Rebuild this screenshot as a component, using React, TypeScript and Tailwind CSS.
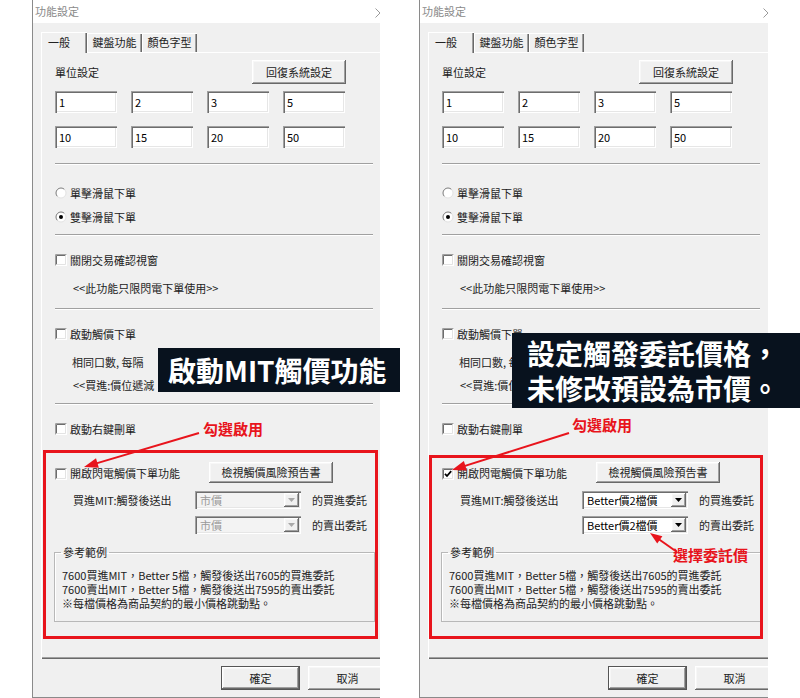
import React from 'react';

const RED = '#e8141c';

const raised =
  'shadow-[inset_-1px_-1px_0_#696969,inset_1px_1px_0_#ffffff,inset_-2px_-2px_0_#a0a0a0,inset_2px_2px_0_#f7f7f7]';
const sunken =
  'shadow-[inset_1px_1px_0_#a0a0a0,inset_2px_2px_0_#6d6d6d,inset_-1px_-1px_0_#ffffff,inset_-2px_-2px_0_#e6e6e6]';
const tabEdge = 'shadow-[inset_1px_1px_0_#ffffff,inset_-1px_0_0_#696969,inset_-2px_0_0_#a0a0a0]';

function CheckBox({ checked = false }: { checked?: boolean }) {
  return (
    <svg width="12" height="12" viewBox="0 0 12 12" className="shrink-0">
      <rect x="0" y="0" width="12" height="12" fill="#ffffff" />
      <path d="M0.5 11.5V0.5H11.5" stroke="#a0a0a0" fill="none" />
      <path d="M1.5 10.5V1.5H10.5" stroke="#6d6d6d" fill="none" />
      <path d="M10.5 1.5V10.5H1.5" stroke="#e3e3e3" fill="none" />
      {checked && <path d="M3 5.8l2 2.2L9.2 3.2" stroke="#000000" strokeWidth="1.8" fill="none" />}
    </svg>
  );
}

function Radio({ checked = false }: { checked?: boolean }) {
  return (
    <svg width="12" height="12" viewBox="0 0 12 12" className="shrink-0">
      <circle cx="6" cy="6" r="5" fill="#ffffff" />
      <path d="M2.46 9.54A5 5 0 0 1 9.54 2.46" stroke="#7a7a7a" fill="none" />
      <path d="M9.54 2.46A5 5 0 0 1 2.46 9.54" stroke="#e3e3e3" fill="none" />
      {checked && <circle cx="6" cy="6" r="2" fill="#000000" />}
    </svg>
  );
}

function WinButton({ children, className = '' }: { children: React.ReactNode; className?: string }) {
  return (
    <div className={`flex shrink-0 items-center justify-center bg-[#f0f0f0] text-[11px] text-[#222222] ${raised} ${className}`}>
      {children}
    </div>
  );
}

function TextBox({ value }: { value: string }) {
  return (
    <div className={`flex h-[22px] items-center bg-white pl-[4px] text-[11px] text-black ${sunken}`}>{value}</div>
  );
}

function Combo({ value, disabled = false }: { value: string; disabled?: boolean }) {
  return (
    <div
      className={`flex h-[18px] w-[106px] shrink-0 p-[2px] ${sunken} ${disabled ? 'bg-[#f3f3f3] text-[#9a9a9a]' : 'bg-white text-black'}`}
    >
      <div className="flex flex-1 items-center pl-[3px] text-[11px] leading-none">{value}</div>
      <div className={`flex w-[15px] items-center justify-center bg-[#f0f0f0] ${raised}`}>
        <svg width="7" height="4" viewBox="0 0 7 4">
          <path d="M0 0h7L3.5 4z" fill={disabled ? '#a8a8a8' : '#000000'} />
        </svg>
      </div>
    </div>
  );
}

function Sep({ className = '' }: { className?: string }) {
  return <div className={`h-[2px] w-[318px] border-t border-b border-t-[#a0a0a0] border-b-white ${className}`} />;
}

function Dialog({ right = false }: { right?: boolean }) {
  return (
    <div
      className={`flex h-[698px] shrink-0 flex-col overflow-hidden border-b border-l border-[#8a8a8a] bg-[#f0f0f0] text-[11px] text-[#222222] ${right ? 'w-[349px]' : 'w-[348px]'}`}
    >
      {/* title bar */}
      <div className="flex h-[23px] shrink-0 items-center justify-between bg-white pl-[2px]">
        <span className="text-[11px] text-[#8a8a8a]">功能設定</span>
        <svg className="-mr-[5px] mt-[2px] shrink-0" width="10" height="10" viewBox="0 0 10 10">
          <path d="M0.5 0.5l9 9M9.5 0.5l-9 9" stroke="#9a9a9a" strokeWidth="1" />
        </svg>
      </div>

      {/* tabs */}
      <div className="flex h-[29px] shrink-0 items-end pl-[8px]">
        <div className={`relative z-10 -mb-px flex h-[21px] w-[46px] items-center bg-[#f0f0f0] pl-[7px] ${tabEdge}`}>一般</div>
        <div className={`flex h-[19px] w-[55px] items-center justify-center ${tabEdge}`}>鍵盤功能</div>
        <div className={`flex h-[19px] w-[55px] items-center justify-center ${tabEdge}`}>顏色字型</div>
      </div>

      {/* tab page */}
      <div className="ml-[8px] h-[607px] w-[360px] shrink-0 pl-[14px] pt-[8px] shadow-[inset_1px_1px_0_#ffffff,inset_0_-1px_0_#696969,inset_0_-2px_0_#a0a0a0]">
        <div className="flex h-[24px] w-[291px] items-center justify-between">
          <span>單位設定</span>
          <WinButton className="h-[24px] w-[94px]">回復系統設定</WinButton>
        </div>
        <div className="mt-[7px] grid w-[290px] grid-cols-4 gap-x-[14px] gap-y-[13px]">
          {['1', '2', '3', '5', '10', '15', '20', '50'].map((v) => (
            <TextBox key={v} value={v} />
          ))}
        </div>

        <Sep className="mt-[15px]" />

        <div className="mt-[20px] flex h-4 items-center gap-[3px]">
          <Radio />
          <span>單擊滑鼠下單</span>
        </div>
        <div className="mt-[8px] flex h-4 items-center gap-[3px]">
          <Radio checked />
          <span>雙擊滑鼠下單</span>
        </div>

        <Sep className="mt-[9px]" />

        <div className="mt-[16px] flex h-4 items-center gap-[3px]">
          <CheckBox />
          <span>關閉交易確認視窗</span>
        </div>
        <div className="mt-[12px] flex h-4 items-center pl-[18px]">&lt;&lt;此功能只限閃電下單使用&gt;&gt;</div>

        <Sep className="mt-[12px]" />

        <div className="mt-[16px] flex h-4 items-center gap-[3px]">
          <CheckBox />
          <span>啟動觸價下單</span>
        </div>
        {/* the rest of these two lines sits under the callout */}
        <div className="mt-[12px] flex h-4 items-center whitespace-nowrap pl-[17px]">相同口數, 每隔</div>
        <div className="mt-[7px] flex h-4 items-center whitespace-nowrap pl-[18px]">&lt;&lt;買進:價位遞減</div>

        <Sep className="mt-[10px]" />

        <div className="mt-[16px] flex h-4 items-center gap-[3px]">
          <CheckBox />
          <span>啟動右鍵刪單</span>
        </div>

        {/* MIT */}
        <div className="mt-[25px] flex h-[21px] items-center">
          <div className="flex w-[154px] items-center gap-[3px] pt-[2px]">
            <CheckBox checked={right} />
            <span className="whitespace-nowrap">開啟閃電觸價下單功能</span>
          </div>
          <WinButton className="h-[21px] w-[124px]">檢視觸價風險預告書</WinButton>
        </div>
        <div className="mt-[8px] flex h-[18px] items-center">
          <span className="w-[140px] shrink-0 whitespace-nowrap pl-[18px]">買進MIT:觸發後送出</span>
          <Combo value={right ? 'Better價2檔價' : '市價'} disabled={!right} />
          <span className="ml-[11px] whitespace-nowrap">的買進委託</span>
        </div>
        <div className="mt-[7px] flex h-[18px] items-center">
          <span className="w-[140px] shrink-0" />
          <Combo value={right ? 'Better價2檔價' : '市價'} disabled={!right} />
          <span className="ml-[11px] whitespace-nowrap">的賣出委託</span>
        </div>

        <fieldset className="-ml-px mt-[11px] w-[321px] border border-[#b8b8b8] shadow-[inset_1px_1px_0_#ffffff]">
          <legend className="ml-[6px] px-[2px] leading-[14px]">參考範例</legend>
          <div className="whitespace-nowrap pb-[11px] pl-[7px] pt-[9px] text-[11px] leading-[14px]">
            <div>7600買進MIT，Better 5檔，觸發後送出7605的買進委託</div>
            <div>7600賣出MIT，Better 5檔，觸發後送出7595的賣出委託</div>
            <div>※每檔價格為商品契約的最小價格跳動點。</div>
          </div>
        </fieldset>
      </div>

      {/* footer */}
      <div className="flex gap-[8px] pl-[188px] pt-[7px]">
        <WinButton className="h-[24px] w-[79px] border border-[#555555]">確定</WinButton>
        <WinButton className="h-[24px] w-[79px]">取消</WinButton>
      </div>
    </div>
  );
}

function Arrow({ x1, y1, x2, y2, head = 14, width = 10 }: { x1: number; y1: number; x2: number; y2: number; head?: number; width?: number }) {
  const len = Math.hypot(x2 - x1, y2 - y1);
  const ux = (x2 - x1) / len;
  const uy = (y2 - y1) / len;
  const bx = x2 - ux * head;
  const by = y2 - uy * head;
  const px = (-uy * width) / 2;
  const py = (ux * width) / 2;
  return (
    <g>
      <line x1={x1} y1={y1} x2={bx + ux * 2} y2={by + uy * 2} stroke={RED} strokeWidth="2" />
      <polygon points={`${x2},${y2} ${bx + px},${by + py} ${bx - px},${by - py}`} fill={RED} />
    </g>
  );
}

export default function App() {
  return (
    <div className="relative flex h-[698px] w-[800px] overflow-hidden bg-white font-['Noto_Sans_CJK_TC','Noto_Sans',sans-serif]">
      <div className="ml-[32px] flex">
        <Dialog />
      </div>
      <div className="ml-[39px] flex">
        <Dialog right />
      </div>

      {/* annotations, left */}
      <div className="absolute left-[43px] top-[450px] h-[189px] w-[335px] border-[3px] border-[#e8141c]" />
      <div className="absolute left-[158px] top-[348px] h-[44px] w-[242px] whitespace-nowrap bg-[#08121e] pl-[10px] text-[28px] font-bold leading-[44px] text-white">
        啟動MIT觸價功能
      </div>
      <div className="absolute left-[203px] top-[420px] text-[15px] font-bold leading-[18px] text-[#e8141c]">勾選啟用</div>

      {/* annotations, right */}
      <div className="absolute left-[429px] top-[455px] h-[184px] w-[334px] border-[3px] border-[#e8141c]" />
      <div className="absolute left-[512px] top-[333px] h-[75px] w-[288px] whitespace-nowrap bg-[#08121e] pl-[15px] pt-[3px] text-[28px] font-bold leading-[35px] text-white">
        <div>設定觸發委託價格，</div>
        <div>未修改預設為市價。</div>
      </div>
      <div className="absolute left-[572px] top-[416px] text-[15px] font-bold leading-[18px] text-[#e8141c]">勾選啟用</div>
      <div className="absolute left-[673px] top-[546px] text-[15px] font-bold leading-[18px] text-[#e8141c]">選擇委託價</div>

      <svg className="pointer-events-none absolute inset-0" width="800" height="698" viewBox="0 0 800 698">
        <Arrow x1={199} y1={433} x2={84} y2={467} />
        <Arrow x1={569} y1={433} x2={452} y2={470} />
        <Arrow x1={677} y1={552} x2={650} y2={533} head={12} width={9} />
      </svg>
    </div>
  );
}
